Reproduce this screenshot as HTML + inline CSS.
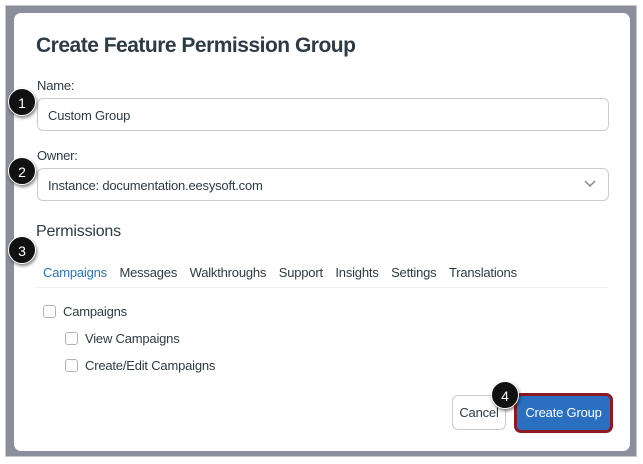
<!DOCTYPE html>
<html><head><style>
*{box-sizing:border-box;margin:0;padding:0}
body{width:643px;height:464px;background:#fff;position:relative;overflow:hidden;font-family:"Liberation Sans",sans-serif;color:#2d3b45;letter-spacing:-0.2px}
.ov{position:absolute;left:5px;top:5px;width:632px;height:452px;background:#8b8f9b;border:1px solid #c8c8c8}
.m{position:absolute;left:14px;top:13px;width:616px;height:438px;background:#fff;border-radius:7px}
.a{position:absolute}
h1{position:absolute;left:36px;top:34px;font-size:21px;font-weight:bold;color:#2d3b45;letter-spacing:-0.5px}
.lbl{font-size:13px;color:#2d3b45}
.in{position:absolute;left:37px;width:572px;height:33px;border:1px solid #c7cdd1;border-radius:6px;font-size:13px;padding:9px 10px;color:#2d3b45}
.tabs{position:absolute;left:43px;top:265px;font-size:13px;display:flex;gap:12.5px}
.cb{position:absolute;width:13px;height:13px;border:1px solid #b0b5ba;border-radius:3px}
.t{position:absolute;font-size:13px}
.b{position:absolute;width:28px;height:28px;border-radius:50%;background:#111;color:#fff;font-size:14px;text-align:center;line-height:28px;border:1.5px solid #fff;box-shadow:1px 2px 3px rgba(0,0,0,.5);letter-spacing:0}
</style></head><body>
<div class="ov"></div>
<div class="m"></div>
<h1>Create Feature Permission Group</h1>
<div class="a lbl" style="left:37px;top:78px">Name:</div>
<div class="in" style="top:98px">Custom Group</div>
<div class="a lbl" style="left:37px;top:148px">Owner:</div>
<div class="in" style="top:168px">Instance: documentation.eesysoft.com</div>
<svg class="a" style="left:584px;top:180px" width="12" height="8"><path d="M1 1l5 5 5-5" stroke="#8b949b" stroke-width="1.6" fill="none"/></svg>
<div class="a" style="left:36px;top:223px;font-size:16px">Permissions</div>
<div class="tabs"><span style="color:#2b73b9">Campaigns</span><span>Messages</span><span>Walkthroughs</span><span>Support</span><span>Insights</span><span>Settings</span><span>Translations</span></div>
<div class="a" style="left:37px;top:287px;width:572px;height:1px;background:#eef0f1"></div>
<div class="cb" style="left:43px;top:305px"></div><div class="t" style="left:63px;top:304px">Campaigns</div>
<div class="cb" style="left:65px;top:332px"></div><div class="t" style="left:85px;top:331px">View Campaigns</div>
<div class="cb" style="left:65px;top:359px"></div><div class="t" style="left:85px;top:358px">Create/Edit Campaigns</div>
<div class="a" style="left:452px;top:395px;width:54px;height:35px;border:1px solid #c7cdd1;border-radius:6px;font-size:13px;text-align:center;line-height:33px">Cancel</div>
<div class="a" style="left:514px;top:393px;width:99px;height:40px;border:3px solid #8c1a22;border-radius:7px;background:#2a6fc0;color:#fff;font-size:13px;text-align:center;line-height:34px">Create Group</div>
<div class="b" style="left:8px;top:88px">1</div>
<div class="b" style="left:8px;top:157px">2</div>
<div class="b" style="left:8px;top:236px">3</div>
<div class="b" style="left:491px;top:381px">4</div>
</body></html>
